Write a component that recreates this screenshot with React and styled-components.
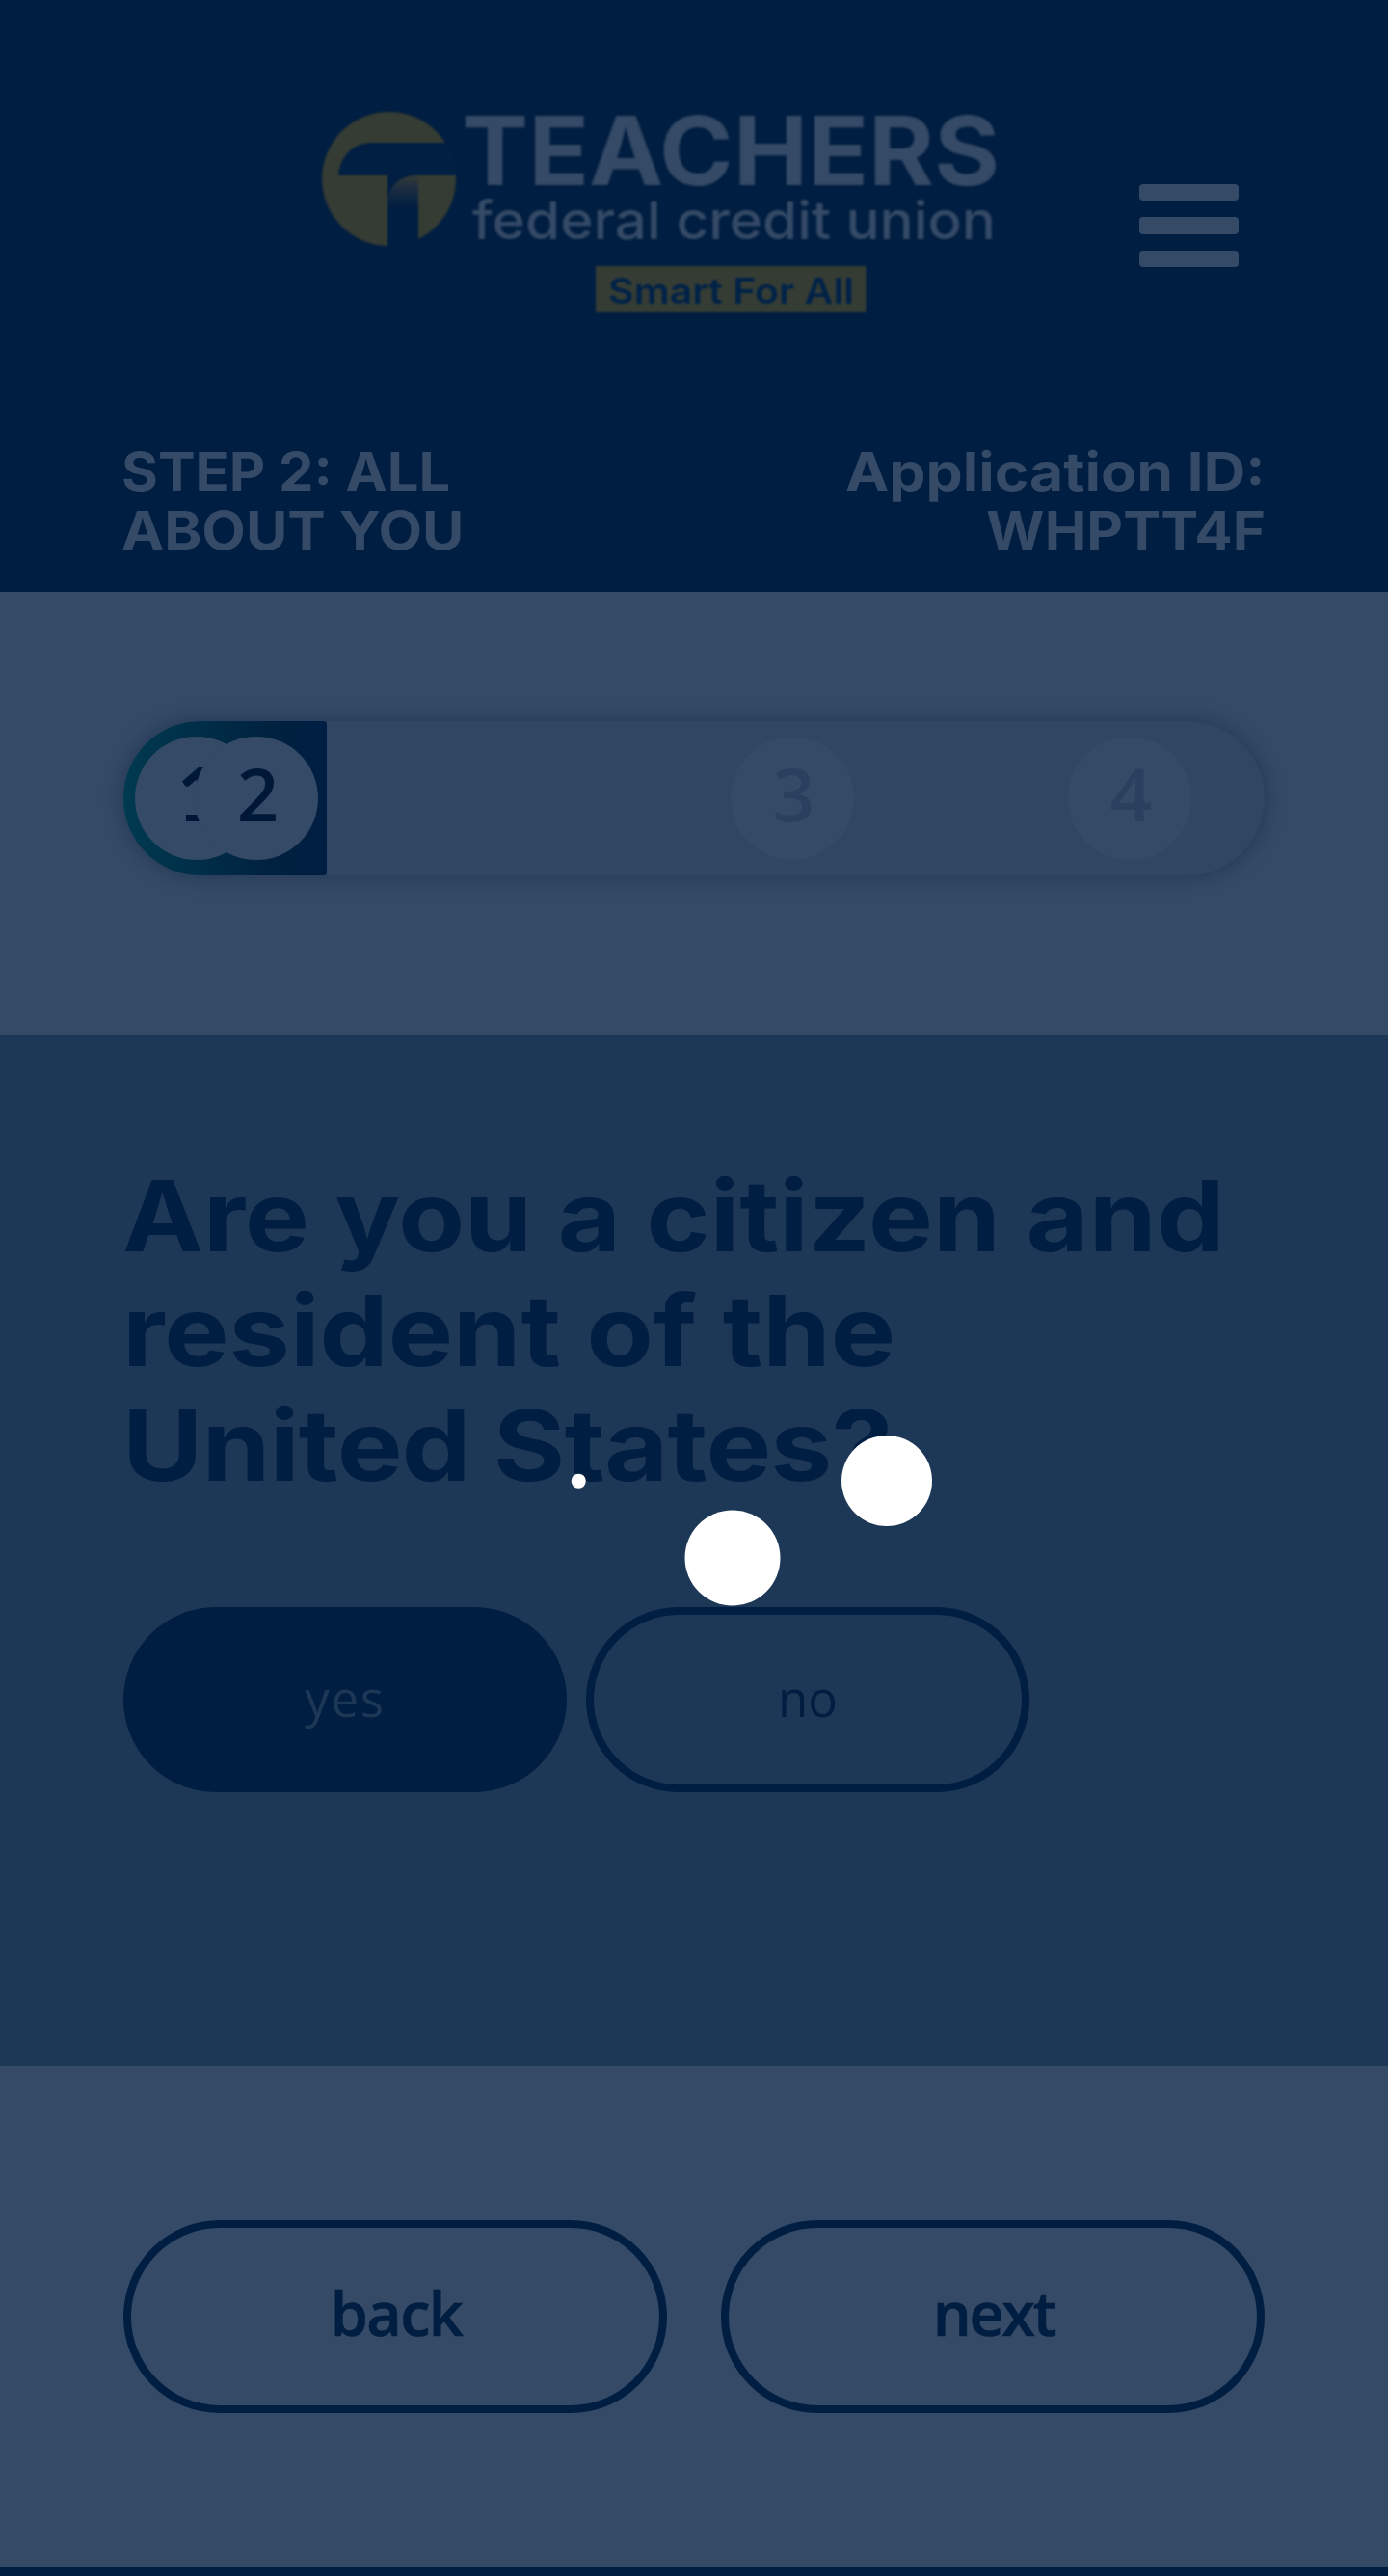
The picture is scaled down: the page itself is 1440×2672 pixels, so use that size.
import React from 'react';
import styled, { createGlobalStyle } from 'styled-components';

const c = {
  navy: '#001e41',
  slate: '#344a66',
  panel: '#1d3756',
  track: '#314662',
  ink: '#001838',
  olive: '#353c34',
};

const Global = createGlobalStyle`
  *, *::before, *::after { box-sizing: border-box; }
  body { margin: 0; background: ${c.navy}; font-family: "Open Sans", "Noto Sans", sans-serif; }
`;

const Page = styled.div`
  position: relative;
  width: 1440px;
  height: 2672px;
  overflow: hidden;
  display: flex;
  flex-direction: column;
  background: ${c.navy};
`;

const Header = styled.header`
  height: 614px;
  padding: 116px 128px 0;
  display: flex;
  flex-direction: column;
  background: ${c.navy};
`;

const Brand = styled.div`
  height: 343px;
  display: flex;
  align-items: flex-start;
  justify-content: space-between;
  padding: 0 27px 0 206px;
`;

const Logo = styled.svg`
  width: 720px;
  height: 210px;
  overflow: visible;
  filter: blur(0.8px);
  font-family: Inter, sans-serif;
`;

const Menu = styled.button`
  width: 103px;
  margin-top: 75px;
  padding: 0;
  border: 0;
  background: none;
  display: flex;
  flex-direction: column;
  gap: 17px;
`;

const MenuBar = styled.span`
  height: 17.33px;
  border-radius: 4px;
  background: ${c.slate};
`;

const Titles = styled.div`
  display: flex;
  justify-content: space-between;
  margin: 0 -1px 0 -2px;
  font: 700 55px/61px Inter, sans-serif;
  color: ${c.slate};
`;

const Title = styled.div`
  display: flex;
  flex-direction: column;
  align-items: ${(p) => (p.$end ? 'flex-end' : 'flex-start')};
`;

/* Widens the face to an extended cut, anchored to the side the line aligns to. */
const Line = styled.span`
  display: block;
  width: max-content;
  white-space: nowrap;
  letter-spacing: ${(p) => p.$track || 0}px;
  word-spacing: ${(p) => p.$word || 0}px;
  transform: scaleX(${(p) => p.$wide || 1});
  transform-origin: ${(p) => (p.$end ? 'right' : 'left')} center;
`;

const Progress = styled.section`
  height: 460px;
  padding: 134px 128px 0;
  background: ${c.slate};
`;

const Track = styled.div`
  height: 160px;
  border-radius: 80px;
  background: ${c.track};
  box-shadow: 0 0 20px rgba(0, 20, 48, 0.36);
  display: flex;
  align-items: center;
`;

const Fill = styled.div`
  width: 211px;
  height: 160px;
  padding-left: 12px;
  border-radius: 80px 3px 3px 80px;
  background: linear-gradient(90deg, #003a50, #00213f 75%, #001e43);
  display: flex;
  align-items: center;
`;

const Step = styled.div`
  flex: none;
  width: 128px;
  height: 128px;
  border-radius: 50%;
  padding: 0 0 11px ${(p) => (p.$first ? 4 : 3)}px;
  margin-left: ${(p) => p.$offset || 0}px;
  display: flex;
  align-items: center;
  justify-content: center;
  background: ${c.slate};
  color: ${(p) => (p.$idle ? '#2b405e' : c.ink)};
  font: ${(p) => (p.$first ? '700 76px/1 Lato' : '600 76px/1 "Open Sans"')}, sans-serif;
`;

const Question = styled.main`
  height: 1069px;
  padding: 128px 128px 0;
  background: ${c.panel};
`;

const Heading = styled.h1`
  margin: 0 0 0 -1px;
  height: 465px;
  font: 700 102px/119px Inter, sans-serif;
  color: ${c.navy};
`;

const Row = styled.div`
  display: flex;
  gap: ${(p) => p.$gap}px;
`;

const Answer = styled.button`
  width: 460px;
  height: 192px;
  padding: 0 0 3px;
  border: 8px solid ${c.navy};
  border-radius: 96px;
  background: ${(p) => (p.$on ? c.navy : 'transparent')};
  color: ${(p) => (p.$on ? c.panel : c.navy)};
  font: 400 51px/1 "Open Sans", sans-serif;
  letter-spacing: ${(p) => (p.$on ? 1.7 : 0)}px;
`;

const Footer = styled.footer`
  height: 520px;
  padding: 160px 128px 0;
  background: ${c.slate};
`;

const Nav = styled.button`
  width: 564px;
  height: 200px;
  padding: 0 0 9px 2px;
  border: 8px solid ${c.navy};
  border-radius: 100px;
  background: transparent;
  color: ${c.navy};
  font: 600 63px/1 "Open Sans", sans-serif;
  -webkit-text-stroke: 0.6px ${c.navy};
  letter-spacing: ${(p) => p.$track}px;
`;

const Overlay = styled.div`
  position: absolute;
  inset: 0;
`;

const Dot = styled.i`
  position: absolute;
  left: ${(p) => p.$x}px;
  top: ${(p) => p.$y}px;
  width: ${(p) => p.$d}px;
  height: ${(p) => p.$d}px;
  border-radius: 50%;
  background: #fff;
  transform: translate(-50%, -50%);
`;

function BrandLogo() {
  return (
    <Logo viewBox="0 0 720 210">
      <defs>
        <linearGradient id="fold" x1="0" y1="0" x2="0" y2="1">
          <stop offset="0" stopColor="#353c34" />
          <stop offset="0.4" stopColor="#1c2c42" />
          <stop offset="1" stopColor="#001e40" />
        </linearGradient>
        <clipPath id="disc"><circle cx="69.5" cy="69.5" r="69.5" /></clipPath>
      </defs>
      <g clipPath="url(#disc)">
        <rect width="140" height="140" fill={c.olive} />
        <path d="M17 66C19 46 32 32 52 32H140V66H100C82 66 72 74 68 90V140H68V66Z" fill="#001f42" />
        <rect x="68" y="66" width="32" height="80" fill={c.navy} />
        <path d="M68 100V90C72 74 82 66 100 66V100Z" fill="url(#fold)" />
      </g>
      <text x="145" y="76" fontSize="99" fontWeight="700" fill={c.slate} textLength="558" lengthAdjust="spacingAndGlyphs">TEACHERS</text>
      <text x="156" y="132" fontSize="54" fontWeight="500" fill={c.slate} textLength="543" lengthAdjust="spacingAndGlyphs">federal credit union</text>
      <rect x="284" y="160" width="280.5" height="48" fill={c.olive} />
      <text x="297" y="199" fontSize="37" fontWeight="600" fill="#002248" textLength="255" lengthAdjust="spacingAndGlyphs">Smart For All</text>
    </Logo>
  );
}

export default function App() {
  return (
    <Page>
      <Global />
      <Header>
        <Brand>
          <BrandLogo />
          <Menu aria-label="Menu"><MenuBar /><MenuBar /><MenuBar /></Menu>
        </Brand>
        <Titles>
          <Title>
            <Line $wide={1.053}>STEP 2: ALL</Line>
            <Line $wide={1.076}>ABOUT YOU</Line>
          </Title>
          <Title $end>
            <Line $end $wide={1.104}>Application ID:</Line>
            <Line $end $wide={1.062}>WHPTT4F</Line>
          </Title>
        </Titles>
      </Header>
      <Progress>
        <Track>
          <Fill>
            <Step $first>1</Step>
            <Step $offset={-66}>2</Step>
          </Fill>
          <Step $idle $offset={419}>3</Step>
          <Step $idle $offset={222}>4</Step>
        </Track>
      </Progress>
      <Question>
        <Heading>
          <Line $wide={1.102}>Are you a citizen and</Line>
          <Line $wide={1.108}>resident of the</Line>
          <Line $wide={1.115} $word={-2} $track={-0.6}>United States?</Line>
        </Heading>
        <Row $gap={20}>
          <Answer $on>yes</Answer>
          <Answer>no</Answer>
        </Row>
      </Question>
      <Footer>
        <Row $gap={56}>
          <Nav $track={-1.7}>back</Nav>
          <Nav $track={-2.4}>next</Nav>
        </Row>
      </Footer>
      <Overlay>
        <Dot $x={600} $y={1536} $d={14.5} />
        <Dot $x={760} $y={1615.5} $d={99} />
        <Dot $x={920} $y={1536} $d={94} />
      </Overlay>
    </Page>
  );
}
